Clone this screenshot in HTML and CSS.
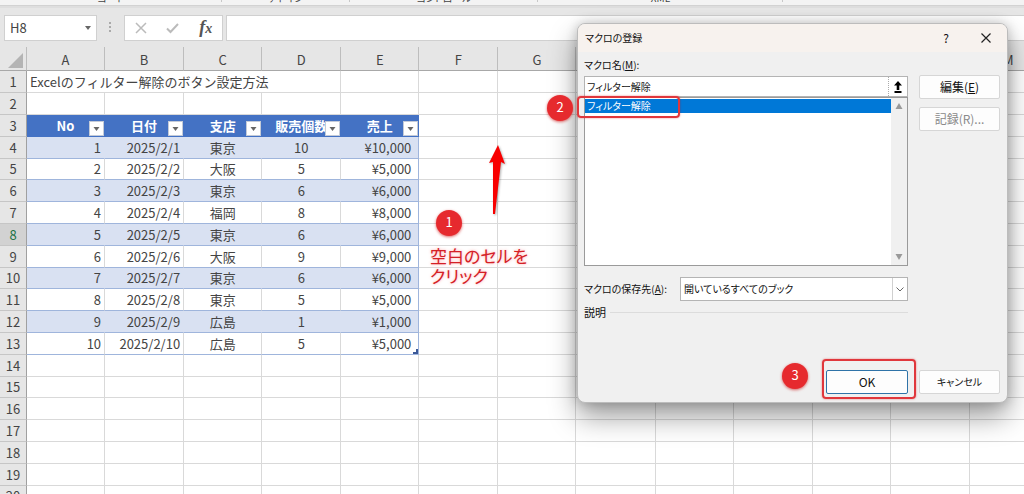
FILE: index.html
```
<!DOCTYPE html>
<html lang="ja">
<head>
<meta charset="utf-8">
<title>マクロの登録</title>
<link rel="stylesheet" href="styles.css">
</head>
<body>
<div class="ribbon">
  <span class="ribbon-group code">コード</span>
  <span class="ribbon-group addin">アドイン</span>
  <span class="ribbon-group control">コントロール</span>
  <span class="ribbon-group xml">XML</span>
</div>
<div class="formula-bar">
  <button class="name-box" type="button">H8
    <svg width="6" height="4" viewBox="0 0 6 4"><path d="M0 0h6L3 4z" fill="#666"/></svg>
  </button>
  <svg class="grip" width="3" height="12" viewBox="0 0 3 12"><path d="M0 0h2v2H0zM0 4h2v2H0zM0 8h2v2H0z" fill="#aaa"/></svg>
  <div class="fx-tools">
    <button type="button" aria-label="キャンセル"><svg width="12" height="12" viewBox="0 0 12 12"><path d="M1 1l10 10M11 1L1 11" stroke="#bbb" stroke-width="1.5"/></svg></button>
    <button type="button" aria-label="入力"><svg width="13" height="12" viewBox="0 0 13 12"><path d="M1 6.5l3.500 3.500L12 2" fill="none" stroke="#bbb" stroke-width="2"/></svg></button>
    <button type="button" class="fx">f<small>x</small></button>
  </div>
  <input class="formula" type="text" aria-label="数式">
</div>
<div class="sheet">
  <table class="grid">
    <colgroup id="cols"></colgroup>
    <thead><tr id="letters"></tr></thead>
    <tbody id="rows"></tbody>
  </table>
</div>

<section class="dialog" role="dialog" aria-labelledby="dialog-title">
  <header class="title-bar">
    <h1 id="dialog-title">マクロの登録</h1>
    <button type="button" class="help">?</button>
    <button type="button" aria-label="閉じる"><svg width="10" height="10" viewBox="0 0 10 10"><path d="M.5.5l9 9M9.500.5l-9 9" stroke="#222" stroke-width="1.2"/></svg></button>
  </header>
  <div class="dialog-body">
    <div class="main">
      <label class="name-label" for="macro">マクロ名(<u>M</u>):</label>
      <div class="name-row">
        <input id="macro" type="text" value="フィルター解除">
        <button type="button" aria-label="参照"><svg width="8" height="12" viewBox="0 0 8 12"><path d="M4 0l4 4.500H5.300V9H2.700V4.500H0zM.5 10h7v2h-7z" fill="#000"/></svg></button>
      </div>
      <div class="macro-list">
        <div class="options" role="listbox" aria-label="マクロ名">
          <div class="option" role="option" aria-selected="true">フィルター解除</div>
        </div>
        <div class="scroll">
          <svg width="8" height="6" viewBox="0 0 8 6"><path d="M4 0l3.500 6h-7z" fill="#999"/></svg>
          <svg width="8" height="6" viewBox="0 0 8 6"><path d="M4 6L.5 0h7z" fill="#999"/></svg>
        </div>
      </div>
      <div class="store-row">
        <label for="store">マクロの保存先(<u>A</u>):</label>
        <div class="select-wrap">
          <select id="store"><option>開いているすべてのブック</option></select>
          <span class="drop"><svg width="8" height="5" viewBox="0 0 8 5"><path d="M.5.5L4 4 7.500.5" fill="none" stroke="#666"/></svg></span>
        </div>
      </div>
      <div class="description">説明</div>
    </div>
    <div class="side">
      <button type="button" class="btn">編集(<u>E</u>)</button>
      <button type="button" class="btn" disabled>記録(R)...</button>
    </div>
  </div>
  <footer class="dialog-foot">
    <button type="button" class="btn ok">OK</button>
    <button type="button" class="btn cancel">キャンセル</button>
  </footer>
</section>

<div class="badge one">1</div>
<div class="badge two">2</div>
<div class="badge three">3</div>
<div class="frame frame-item"></div>
<div class="frame frame-ok"></div>
<svg class="arrow" width="18" height="72" viewBox="0 0 18 72"><path d="M10 1l7 19-4-2L7 70H5L5 18l-4 1z" fill="#f80000"/></svg>
<p class="note">空白のセルを<br>クリック</p>
<script src="app.js"></script>
</body>
</html>
```
FILE: styles.css
```
* { box-sizing: border-box; }
body {
  margin: 0;
  height: 100vh;
  overflow: hidden;
  position: relative;
  display: flex;
  flex-direction: column;
  background: #e6e6e6;
  color: #444;
  font: 13px/20px "Noto Sans CJK JP", sans-serif;
}
button, input, select { font: inherit; color: inherit; margin: 0; padding: 0; border: 0; background: none; }
svg { display: block; }

.ribbon {
  flex: none;
  display: flex;
  align-items: flex-end;
  height: 6px;
  overflow: hidden;
  background: #f3f3f3;
  border-bottom: 1px solid #d2d2d2;
}
.ribbon-group {
  flex: none;
  height: 20px;
  text-align: center;
  font-size: 10px;
  line-height: 26px;
  font-feature-settings: "palt";
  background: linear-gradient(#c8c8c8, #c8c8c8) right top / 1px 17px no-repeat;
}
.code { width: 222px; }
.addin { width: 128px; }
.control { width: 188px; }
.xml { width: 245px; }

.formula-bar {
  flex: none;
  display: flex;
  align-items: center;
  height: 41px;
  padding: 3px 0 2px 4px;
  border-top: 2px solid #dedede;
}
.name-box, .fx-tools, .formula { height: 26px; background: #fff; border: 1px solid #d0d0d0; }
.name-box {
  width: 93px;
  display: flex;
  align-items: center;
  justify-content: space-between;
  padding: 0 5px;
}
.grip { margin: 0 12px 0 12px; }
.fx-tools { width: 99px; display: flex; justify-content: space-around; align-items: center; }
.fx { font: italic 700 18px/20px "Liberation Serif", serif; color: #555; }
.fx small { font-size: 14px; }
.formula { flex: 1; margin-left: 3px; border-right: 0; }

.sheet { flex: 1; overflow: hidden; background: #fff; }
.grid { table-layout: fixed; width: 1048px; border-spacing: 0; }
.col-head { width: 27px; }
.col-odd { width: 78px; }
.col-even { width: 79px; }
.grid th, .grid td {
  height: 22px;
  padding: 0 3px;
  line-height: 18px;
  border: solid #d9d9d9;
  border-width: 0 1px 1px 0;
  white-space: nowrap;
  overflow: hidden;
  position: relative;
}
.grid tr:nth-child(5n) > * { height: 21px; }
.grid th { font-weight: 400; background: #e6e6e6; }
.grid thead th { height: 24px; padding-top: 3px; border-color: #bdbdbd; border-bottom-color: #a8a8a8; }
.grid tbody th { border-right-color: #a0a0a0; border-bottom-color: #c6c6c6; }
.grid tbody th.active { background: #d2d2d2; color: #217346; }
.grid thead th:first-child { vertical-align: bottom; padding: 0 3px 2px 8px; }
.grid td.field {
  background: #4472c4;
  border-color: #4472c4;
  color: #fff;
  font-weight: 700;
  text-align: center;
}
.grid td.data { border-bottom-color: #9fb5dc; }
.grid td.band { background: #d9e1f2; border-right-color: #d9e1f2; }
.grid td.edge { border-right-color: #9fb5dc; padding-right: 7px; }
.right { text-align: right; }
.center { text-align: center; }
.filter {
  position: absolute;
  right: 0;
  bottom: 0;
  width: 15px;
  height: 15px;
  display: grid;
  place-items: center;
  background: #fff;
  border: 1px solid #c4cbd8;
}
.corner { position: absolute; right: 0; bottom: 0; }

.dialog {
  position: absolute;
  left: 577px;
  top: 23px;
  width: 431px;
  display: flex;
  flex-direction: column;
  background: #f0f0f0;
  border: 1px solid #bcbcbc;
  border-radius: 8px;
  overflow: hidden;
  color: #111;
  font-size: 10px;
  line-height: 16px;
  font-feature-settings: "palt";
  box-shadow: 0 14px 28px rgba(0, 0, 0, .38), 0 0 12px rgba(0, 0, 0, .2);
}
.title-bar { display: flex; align-items: center; height: 28px; padding: 0 16px 0 7px; background: #f7f2ee; }
.title-bar h1 { flex: 1; margin: 0; font-size: 10px; font-weight: 400; }
.help { margin-right: 32px; font-size: 12px; }
.dialog-body { display: flex; gap: 11px; padding: 5px 7px 0 6px; }
.main { flex: 1; min-width: 0; }
.name-label { display: block; height: 19px; }
.name-row { display: flex; height: 21px; background: #fff; border: 1px solid #b4b4b4; }
.name-row input { flex: 1; min-width: 0; padding-left: 2px; font-feature-settings: "palt"; }
.name-row button { width: 19px; display: grid; place-items: center; border-left: 1px dotted #aaa; }
.macro-list { display: flex; height: 169px; background: #fff; border: 1px solid #9a9a9a; }
.options { flex: 1; }
.option { height: 14px; margin-top: 1px; padding-left: 2px; line-height: 14px; background: #0078d7; color: #fff; }
.scroll { width: 16px; padding: 5px 4px; display: flex; flex-direction: column; justify-content: space-between; background: #f0f0f0; }
.store-row { display: flex; align-items: center; justify-content: space-between; margin-top: 11px; white-space: nowrap; }
.select-wrap { display: flex; width: 228px; height: 24px; background: #fff; border: 1px solid #b4b4b4; }
.select-wrap select { flex: 1; min-width: 0; appearance: none; padding-left: 3px; font-feature-settings: "palt"; }
.drop { width: 15px; display: grid; place-items: center; border-left: 1px solid #d0d0d0; }
.description { display: flex; align-items: center; gap: 4px; margin-top: 3px; font-size: 11px; }
.description::after { content: ""; flex: 1; height: 1px; background: #dcdcdc; }
.side { width: 81px; display: flex; flex-direction: column; gap: 8px; padding-top: 18px; }
.btn { width: 81px; height: 24px; background: #fdfdfd; border: 1px solid #d6d6d6; border-radius: 2px; font-size: 12px; font-feature-settings: "palt"; }
.btn:disabled { color: #8a8a8a; }
.ok { width: 82px; border-color: #2f73a8; }
.cancel { font-size: 10px; }
.dialog-foot { display: flex; justify-content: flex-end; gap: 11px; padding: 50px 7px 8px; }

.badge {
  position: absolute;
  width: 26px;
  height: 26px;
  border-radius: 50%;
  background: #e62a2e;
  color: #fff;
  text-align: center;
  font-size: 13px;
  line-height: 24px;
  box-shadow: 0 1px 3px rgba(200, 0, 0, .6);
}
.one { left: 436px; top: 210px; }
.two { left: 547px; top: 95px; }
.three { left: 782px; top: 363px; }
.frame { position: absolute; border: 2px solid #e0373c; border-radius: 4px; box-shadow: 0 0 2px rgba(220, 0, 0, .5); }
.frame-item { left: 577px; top: 96px; width: 103px; height: 22px; }
.frame-ok { left: 822px; top: 359px; width: 94px; height: 40px; }
.arrow { position: absolute; left: 488px; top: 144px; filter: drop-shadow(1px 1px 1px rgba(0, 0, 0, .3)); }
.note {
  position: absolute;
  left: 430px;
  top: 246px;
  margin: 0;
  color: #d42026;
  font-size: 17px;
  line-height: 20px;
  font-feature-settings: "palt";
  text-shadow: 0 0 3px rgba(255, 80, 80, .5);
}
```
FILE: app.js
```
const letters = "ABCDEFGHIJKLM".split("");
const fields = ["No", "日付", "支店", "販売個数", "売上"];
const records = [
  ["東京", 10, "10,000"], ["大阪", 5, "5,000"], ["東京", 6, "6,000"],
  ["福岡", 8, "8,000"], ["東京", 6, "6,000"], ["大阪", 9, "9,000"],
  ["東京", 6, "6,000"], ["東京", 5, "5,000"], ["広島", 1, "1,000"],
  ["広島", 5, "5,000"]
];
const align = ["right", "right", "center", "center", "right edge"];
const filter = '<button type="button" class="filter" aria-label="フィルター"><svg width="7" height="4" viewBox="0 0 7 4"><path d="M.5 0h6l-3 4z" fill="#666"/></svg></button>';
const corner = '<svg class="corner" width="5" height="5" viewBox="0 0 5 5"><path d="M3 0h2v5H0V3h3z" fill="#3b5998"/></svg>';

document.getElementById("cols").innerHTML = '<col class="col-head">' +
  letters.map((_, i) => `<col class="${i % 2 ? "col-even" : "col-odd"}">`).join("");
document.getElementById("letters").innerHTML =
  '<th><svg width="15" height="15" viewBox="0 0 15 15"><path d="M15 0v15H0z" fill="#b4b4b4"/></svg></th>' +
  letters.map(l => `<th>${l}</th>`).join("");

function cells(row) {
  if (row === 1) {
    return '<td colspan="4">Excelのフィルター解除のボタン設定方法</td>' + "<td></td>".repeat(9);
  }
  if (row === 3) {
    return fields.map(f => `<td class="field">${f}${filter}</td>`).join("") + "<td></td>".repeat(8);
  }
  const record = records[row - 4];
  if (!record) return "<td></td>".repeat(13);
  const n = row - 3;
  const values = [n, `2025/2/${n}`, record[0], record[1], "¥" + record[2] + (n === 10 ? corner : "")];
  const band = n % 2 && n < 10 ? " band" : "";
  return values.map((v, i) => `<td class="data ${align[i]}${band}">${v}</td>`).join("") + "<td></td>".repeat(8);
}

let html = "";
for (let row = 1; row <= 20; row++) {
  html += `<tr><th${row === 8 ? ' class="active"' : ""}>${row}</th>${cells(row)}</tr>`;
}
document.getElementById("rows").innerHTML = html;
```
